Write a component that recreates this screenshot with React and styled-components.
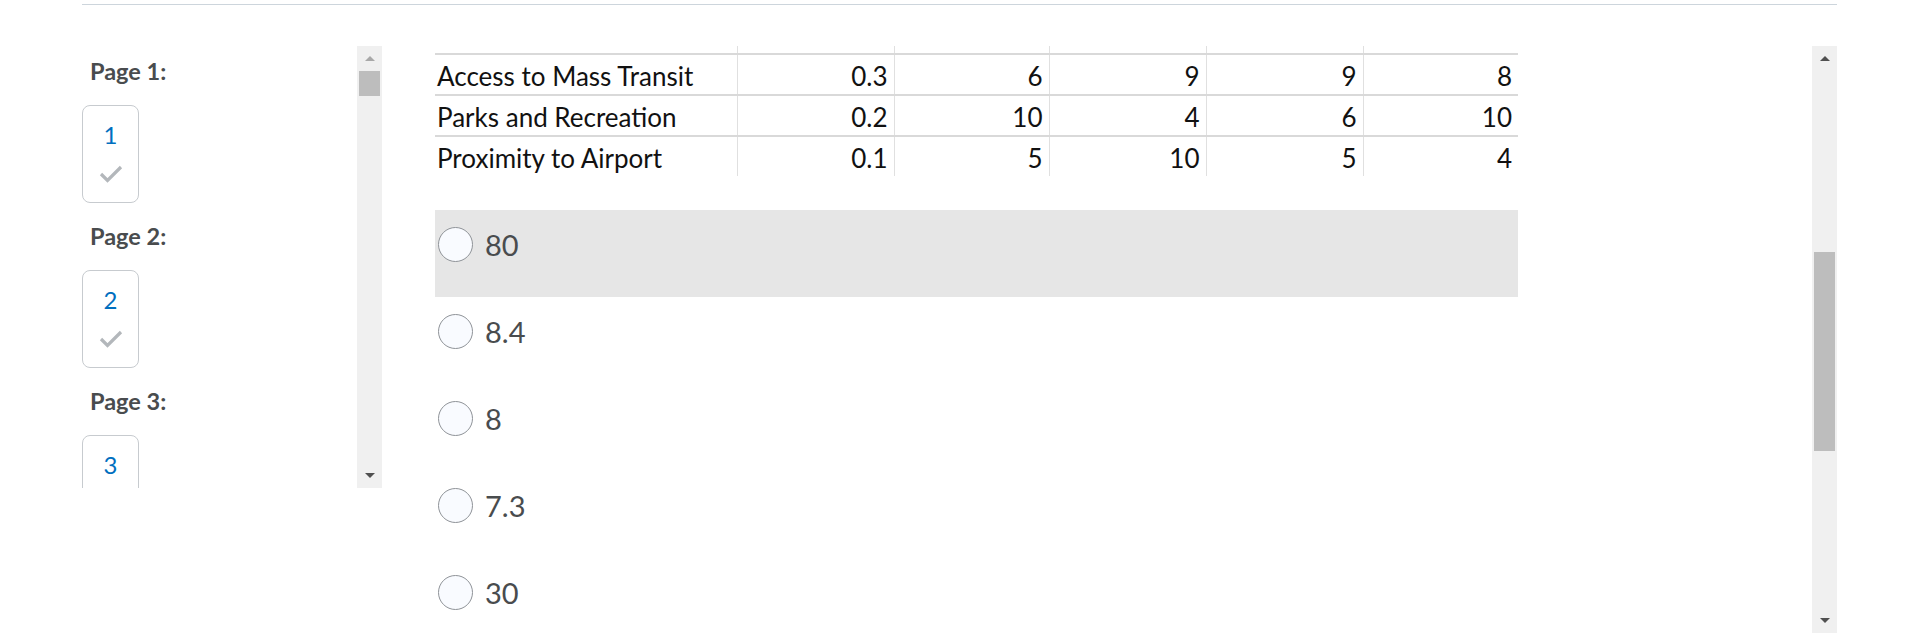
import React from "react";
import styled, { createGlobalStyle } from "styled-components";

const GlobalStyle = createGlobalStyle`
  html, body {
    margin: 0;
    padding: 0;
    background: #fff;
    font-family: Lato, "Open Sans", sans-serif;
  }
`;

const Page = styled.div`
  width: 1755px;
  margin-left: 82px;
  height: 633px;
  overflow: hidden;
`;

const TopRule = styled.div`
  height: 1px;
  margin-top: 4px;
  background: #cdd5dc;
`;

const Body = styled.div`
  display: flex;
  margin-top: 41px;
  height: 587px;
`;

const Sidebar = styled.div`
  display: flex;
  width: 300px;
  height: 442px;
  flex-shrink: 0;
`;

const PageList = styled.div`
  flex: 1;
  overflow: hidden;
  padding-top: 10px;
`;

const PageLabel = styled.div`
  font-size: 23.5px;
  font-weight: 700;
  line-height: 30px;
  color: #494c4e;
  padding-left: 8px;
  margin-bottom: 19px;
`;

const PageCard = styled.div`
  width: 55px;
  height: 96px;
  border: 1px solid #c7cbcf;
  border-radius: 8px;
  display: flex;
  flex-direction: column;
  align-items: center;
  margin-bottom: 18px;
`;

const PageNumber = styled.div`
  color: #006fbf;
  font-size: 24px;
  line-height: 28px;
  margin-top: 15px;
`;

const Check = styled.svg`
  margin-top: 16px;
`;

const ScrollBar = styled.div`
  width: 25px;
  height: 100%;
  background: #f0f0f0;
  display: flex;
  flex-direction: column;
  flex-shrink: 0;
`;

const ArrowBox = styled.div`
  height: 25px;
  display: flex;
  align-items: center;
  justify-content: center;
`;

const Arrow = styled.div`
  width: 0;
  height: 0;
  border-left: 5px solid transparent;
  border-right: 5px solid transparent;
  ${(p) =>
    p.down
      ? `border-top: 5px solid ${p.color};`
      : `border-bottom: 5px solid ${p.color};`}
`;

const Track = styled.div`
  flex: 1;
  display: flex;
  justify-content: center;
`;

const Thumb = styled.div`
  width: 21px;
  height: ${(p) => p.size}px;
  margin-top: ${(p) => p.offset}px;
  background: #bdbdbd;
`;

const Main = styled.div`
  flex: 1;
  display: flex;
  margin-left: 53px;
  height: 587px;
`;

const Content = styled.div`
  flex: 1;
  overflow: hidden;
`;

const Table = styled.table`
  border-collapse: collapse;
  font-family: Lato, "Open Sans", sans-serif;
  font-size: 26px;
  color: #111;
`;

const Cell = styled.td`
  width: ${(p) => p.w}px;
  height: ${(p) => p.h || 40}px;
  padding: 3px ${(p) => (p.num ? "6px" : "0")} 0 ${(p) => (p.num ? "0" : "2px")};
  box-sizing: border-box;
  text-align: ${(p) => (p.num ? "right" : "left")};
  border-right: ${(p) => (p.last ? "none" : "1.5px solid #e0e0e0")};
  border-bottom: ${(p) => (p.nobottom ? "none" : "2px solid #d9d9d9")};
  vertical-align: middle;
  line-height: 1;
  white-space: nowrap;
`;

const Options = styled.div`
  width: 1083px;
  margin-top: 34px;
`;

const Option = styled.label`
  display: flex;
  align-items: flex-start;
  height: 87px;
  padding-top: 17px;
  box-sizing: border-box;
  background: ${(p) => (p.hover ? "#e6e6e6" : "transparent")};
`;

const Radio = styled.span`
  width: 33px;
  height: 33px;
  border: 1px solid #8f9398;
  border-radius: 50%;
  background: #f9fbff;
  margin-left: 3px;
  flex-shrink: 0;
`;

const OptionText = styled.span`
  font-size: 29px;
  color: #494c4e;
  line-height: 35px;
  margin-left: 12px;
`;

const pages = [1, 2, 3];
const colW = [302, 157, 155, 157, 157, 155];
const rows = [
  ["Access to Mass Transit", "0.3", "6", "9", "9", "8"],
  ["Parks and Recreation", "0.2", "10", "4", "6", "10"],
  ["Proximity to Airport", "0.1", "5", "10", "5", "4"],
];
const answers = ["80", "8.4", "8", "7.3", "30"];

const Bar = ({ thumb, offset, upColor }) => (
  <ScrollBar>
    <ArrowBox>
      <Arrow color={upColor} />
    </ArrowBox>
    <Track>
      <Thumb size={thumb} offset={offset} />
    </Track>
    <ArrowBox>
      <Arrow down color="#505050" />
    </ArrowBox>
  </ScrollBar>
);

export default function App() {
  return (
    <Page>
      <GlobalStyle />
      <TopRule />
      <Body>
        <Sidebar>
          <PageList>
            {pages.map((n) => (
              <div key={n}>
                <PageLabel>Page {n}:</PageLabel>
                <PageCard>
                  <PageNumber>{n}</PageNumber>
                  <Check width="24" height="20" viewBox="0 0 24 20">
                    <polyline
                      points="2,9 8.5,15.5 22,2"
                      fill="none"
                      stroke="#b3b7bb"
                      strokeWidth="3.2"
                    />
                  </Check>
                </PageCard>
              </div>
            ))}
          </PageList>
          <Bar thumb={25} offset={0} upColor="#a8a8a8" />
        </Sidebar>
        <Main>
          <Content>
            <Table>
              <tbody>
                <tr>
                  {colW.map((w, i) => (
                    <Cell key={i} w={w} h={8} last={i === 5} />
                  ))}
                </tr>
                {rows.map((r, ri) => (
                  <tr key={ri}>
                    {r.map((c, ci) => (
                      <Cell
                        key={ci}
                        w={colW[ci]}
                        h={ri === 2 ? 40 : 41}
                        num={ci > 0}
                        last={ci === 5}
                        nobottom={ri === 2}
                      >
                        {c}
                      </Cell>
                    ))}
                  </tr>
                ))}
              </tbody>
            </Table>
            <Options>
              {answers.map((a, i) => (
                <Option key={a} hover={i === 0}>
                  <Radio />
                  <OptionText>{a}</OptionText>
                </Option>
              ))}
            </Options>
          </Content>
          <Bar thumb={199} offset={181} upColor="#505050" />
        </Main>
      </Body>
    </Page>
  );
}
